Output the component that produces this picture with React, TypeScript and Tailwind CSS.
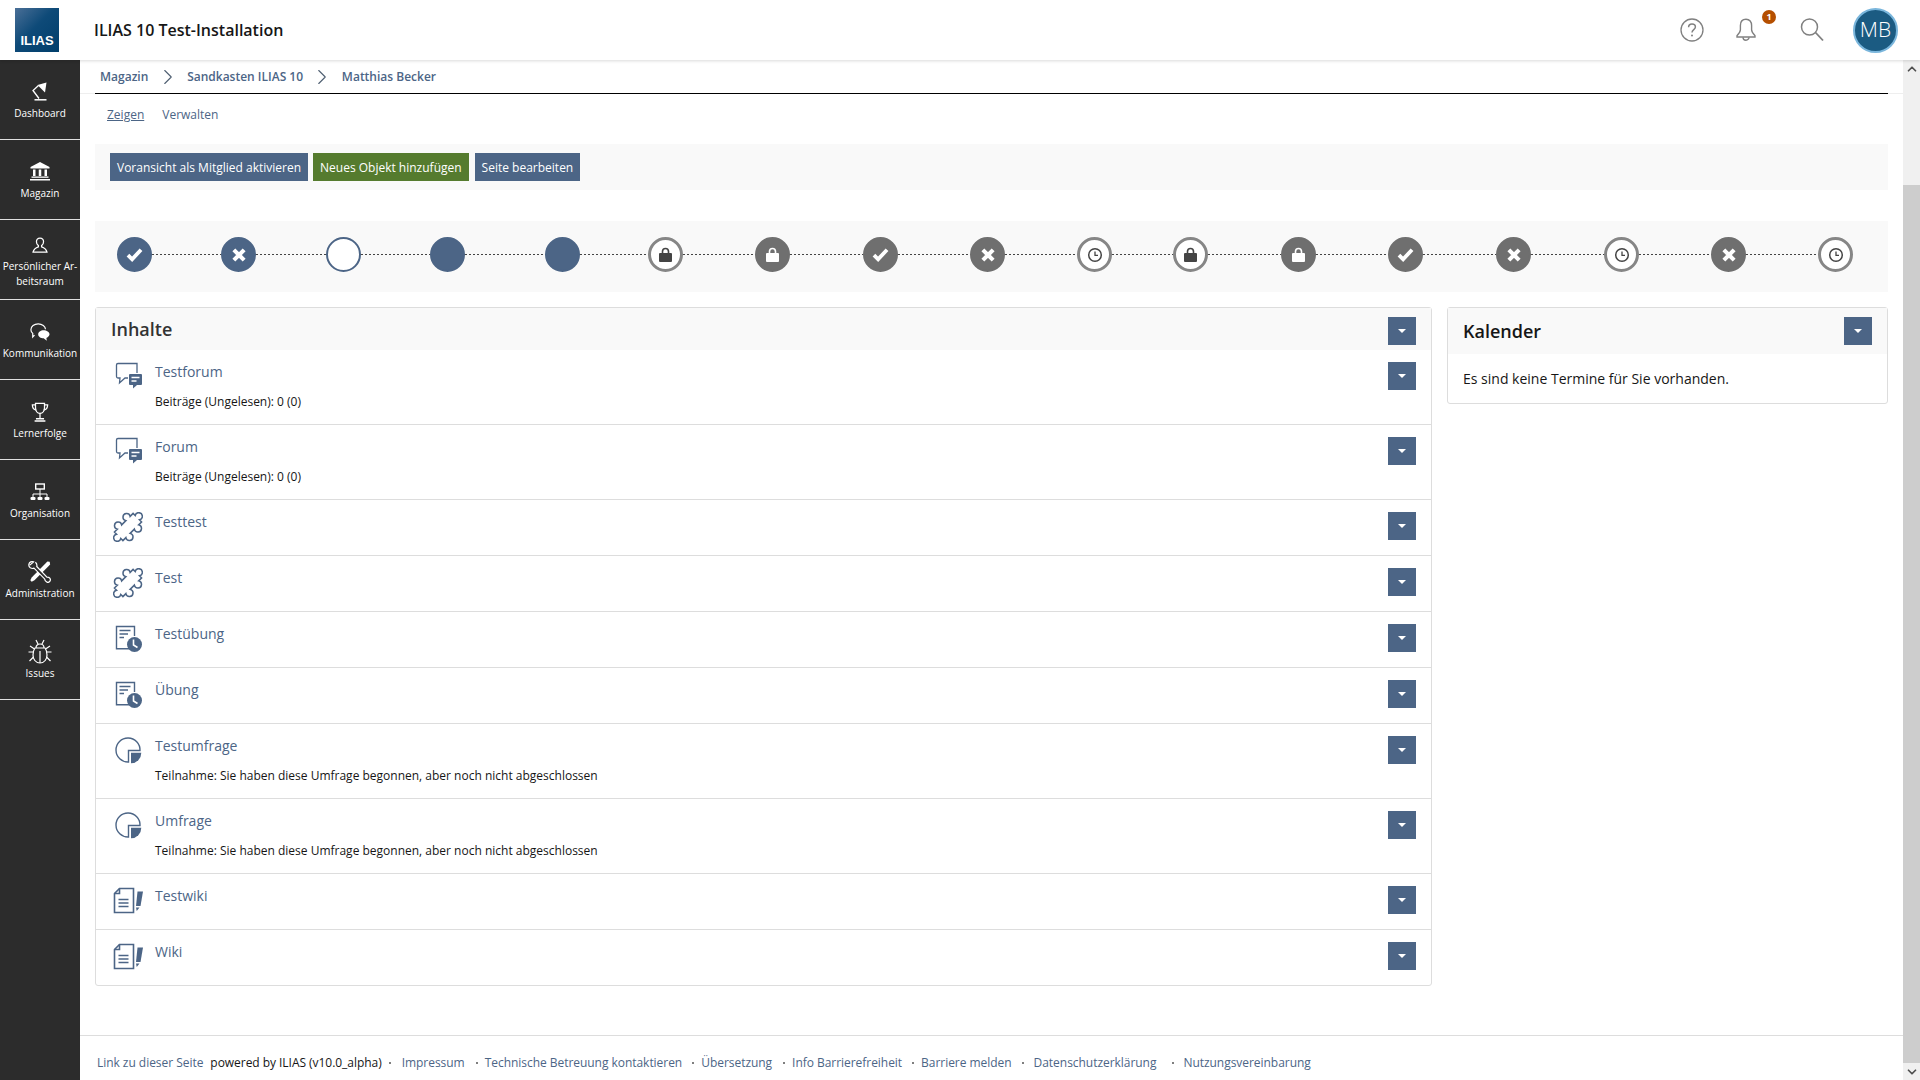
import { ChevronRight, ChevronUp, ChevronDown } from "lucide-react"

const font = "font-['Open_Sans',sans-serif]"

const navItems = [
  { label: ["Dashboard"], icon: <LampIcon /> },
  { label: ["Magazin"], icon: <BankIcon /> },
  { label: ["Persönlicher Ar-", "beitsraum"], icon: <UserIcon /> },
  { label: ["Kommunikation"], icon: <ChatNavIcon /> },
  { label: ["Lernerfolge"], icon: <TrophyIcon /> },
  { label: ["Organisation"], icon: <OrgIcon /> },
  { label: ["Administration"], icon: <ToolsIcon /> },
  { label: ["Issues"], icon: <BugIcon /> },
]

type NodeKind = "check" | "cross" | "ring" | "fill" | "lock" | "clock"

// gap = distance to the next circle centre, the steps are not equal in the picture
const steps: { kind: NodeKind; tone: "blue" | "gray"; outline?: boolean; gap: number }[] = [
  { kind: "check", tone: "blue", gap: 104 },
  { kind: "cross", tone: "blue", gap: 105 },
  { kind: "ring", tone: "blue", outline: true, gap: 104 },
  { kind: "fill", tone: "blue", gap: 115 },
  { kind: "fill", tone: "blue", gap: 103 },
  { kind: "lock", tone: "gray", outline: true, gap: 107 },
  { kind: "lock", tone: "gray", gap: 108 },
  { kind: "check", tone: "gray", gap: 107 },
  { kind: "cross", tone: "gray", gap: 107 },
  { kind: "clock", tone: "gray", outline: true, gap: 96 },
  { kind: "lock", tone: "gray", outline: true, gap: 108 },
  { kind: "lock", tone: "gray", gap: 107 },
  { kind: "check", tone: "gray", gap: 108 },
  { kind: "cross", tone: "gray", gap: 108 },
  { kind: "clock", tone: "gray", outline: true, gap: 107 },
  { kind: "cross", tone: "gray", gap: 107 },
  { kind: "clock", tone: "gray", outline: true, gap: 0 },
]

const rows = [
  { title: "Testforum", sub: "Beiträge (Ungelesen): 0 (0)", icon: <ForumIcon /> },
  { title: "Forum", sub: "Beiträge (Ungelesen): 0 (0)", icon: <ForumIcon /> },
  { title: "Testtest", icon: <PuzzleIcon /> },
  { title: "Test", icon: <PuzzleIcon /> },
  { title: "Testübung", icon: <ExerciseIcon /> },
  { title: "Übung", icon: <ExerciseIcon /> },
  { title: "Testumfrage", sub: "Teilnahme: Sie haben diese Umfrage begonnen, aber noch nicht abgeschlossen", icon: <SurveyIcon /> },
  { title: "Umfrage", sub: "Teilnahme: Sie haben diese Umfrage begonnen, aber noch nicht abgeschlossen", icon: <SurveyIcon /> },
  { title: "Testwiki", icon: <WikiIcon /> },
  { title: "Wiki", icon: <WikiIcon /> },
]

export default function App() {
  return (
    <div className={`flex h-screen flex-col overflow-hidden bg-white text-[#161616] ${font}`}>
      <header className="relative z-10 flex h-[60px] shrink-0 items-center bg-white shadow-[0_1px_3px_rgba(0,0,0,0.15)]">
        <div className="ml-[15px] flex h-[44px] w-[44px] items-end justify-center bg-[linear-gradient(135deg,#4a6f97_0%,#0e4a78_45%,#003e6b_100%)] pb-[1px]">
          <span className="font-['Liberation_Sans',sans-serif] text-[13px] font-bold leading-[20px] text-white">ILIAS</span>
        </div>
        <div className="ml-[35px] text-[16px] font-semibold text-[#161616]">ILIAS 10 Test-Installation</div>
        <div className="ml-auto mr-[22px] flex items-center">
          <HelpIcon />
          <div className="relative ml-[31px]">
            <BellIcon />
            <span className="absolute left-[27px] top-[-8px] flex h-[14px] w-[14px] items-center justify-center rounded-full bg-[#b54f00] text-[9px] font-bold text-white">1</span>
          </div>
          <div className="ml-[43px]"><SearchIcon /></div>
          <div className="ml-[29px] flex h-[45px] w-[45px] items-center justify-center rounded-full border-2 border-[#7ab6dc] bg-[#1b5b82] text-[21px] font-light text-white">MB</div>
        </div>
      </header>

      <div className="flex min-h-0 flex-1">
        <nav className="w-[80px] shrink-0 bg-[#2c2c2c]">
          {navItems.map((item) => (
            <div key={item.label[0]} className={`flex h-[80px] flex-col items-center border-b border-[#e0e0e0] text-white ${item.label.length > 1 ? "pt-[12px]" : "pt-[19px]"}`}>
              <div className="flex h-[25px] w-[30px] items-center justify-center">{item.icon}</div>
              <div className="mt-[2px] text-center text-[10px] leading-[15px]">
                {item.label.map((line) => <div key={line} className="whitespace-nowrap">{line}</div>)}
              </div>
            </div>
          ))}
        </nav>

        <main className="flex min-w-0 flex-1 flex-col">
          <div className="border-b border-[#eeeeee]">
            <div className="mx-[15px] -mb-px flex h-[34px] items-center border-b border-black pl-[5px] text-[12px] font-semibold text-[#4c6586]">
              <span>Magazin</span>
              <ChevronRight className="mx-[6.4px] h-[26px] w-[26px] text-[#4f5f72]" strokeWidth={1} />
              <span>Sandkasten ILIAS 10</span>
              <ChevronRight className="mx-[6.4px] h-[26px] w-[26px] text-[#4f5f72]" strokeWidth={1} />
              <span>Matthias Becker</span>
            </div>
          </div>

          <div className="px-[15px]">
            <div className="flex h-[50px] items-center gap-[18px] pb-[8px] pl-[12px] text-[12px] text-[#4c6586]">
              <span className="underline">Zeigen</span>
              <span>Verwalten</span>
            </div>

            <div className="flex h-[46px] items-center gap-[5px] bg-[#f9f9f9] pl-[15px]">
              <Btn>Voransicht als Mitglied aktivieren</Btn>
              <Btn green>Neues Objekt hinzufügen</Btn>
              <Btn>Seite bearbeiten</Btn>
            </div>

            <div className="mt-[31px] flex h-[71px] items-center bg-[#f9f9f9] pb-[4px] pl-[22px]">
              {steps.map((step, i) => (
                <div key={i} className="flex items-center">
                  <StepNode kind={step.kind} tone={step.tone} outline={step.outline} />
                  {step.gap > 0 && (
                    <div
                      className="h-[1px] bg-[repeating-linear-gradient(90deg,#444444_0,#444444_2px,transparent_2px,transparent_4px)]"
                      style={{ width: step.gap - 35 }}
                    />
                  )}
                </div>
              ))}
            </div>

            <div className="mt-[15px] flex items-start gap-[15px]">
              <section className="min-w-0 flex-1 rounded-[3px] border border-[#dddddd]">
                <div className="flex h-[42px] items-center justify-between bg-[#f9f9f9] px-[15px]">
                  <h2 className="text-[18px] font-semibold text-[#333333]">Inhalte</h2>
                  <div className="mt-[4px]"><Caret /></div>
                </div>
                {rows.map((row) => (
                  <div key={row.title} className={`flex border-b border-[#dddddd] last:h-[55px] last:border-b-0 ${row.sub ? "h-[75px]" : "h-[56px]"} pl-[17px] pr-[15px]`}>
                    <div className="mt-[12px] h-[30px] w-[30px] shrink-0">{row.icon}</div>
                    <div className="ml-[12px] min-w-0 flex-1 pt-[12px]">
                      <div className="text-[14px] leading-[20px] text-[#4c6586]">{row.title}</div>
                      {row.sub && <div className="mt-[11px] text-[12px] leading-[18px] text-[#161616]">{row.sub}</div>}
                    </div>
                    <div className="mt-[12px]"><Caret /></div>
                  </div>
                ))}
              </section>

              <section className="w-[441px] shrink-0 rounded-[3px] border border-[#dddddd]">
                <div className="flex h-[46px] items-center justify-between bg-[#f9f9f9] pl-[15px] pr-[15px]">
                  <h2 className="text-[18px] font-semibold text-[#161616]">Kalender</h2>
                  <Caret />
                </div>
                <div className="px-[15px] pb-[14px] pt-[15px] text-[14px] leading-[20px]">Es sind keine Termine für Sie vorhanden.</div>
              </section>
            </div>
          </div>

          <footer className="mt-[49px] flex h-[46px] items-center border-t border-[#dddddd] pl-[17px] pt-[9px] text-[12px] tracking-[-0.04px] text-[#4c6586]">
            <span>Link zu dieser Seite</span>
            <span className="ml-[7px] text-[#161616]">powered by ILIAS (v10.0_alpha)</span>
            <Dot className="ml-[7px] mr-[11px]" />
            <span>Impressum</span>
            <Dot className="ml-[11px] mr-[7px]" />
            <span>Technische Betreuung kontaktieren</span>
            <Dot className="ml-[10px] mr-[7px]" />
            <span>Übersetzung</span>
            <Dot className="ml-[11px] mr-[7px]" />
            <span>Info Barrierefreiheit</span>
            <Dot className="ml-[10px] mr-[7px]" />
            <span>Barriere melden</span>
            <Dot className="mx-[10px]" />
            <span>Datenschutzerklärung</span>
            <Dot className="ml-[16px] mr-[9px]" />
            <span>Nutzungsvereinbarung</span>
          </footer>
        </main>

        <div className="flex w-[17px] shrink-0 flex-col bg-[#f0f0f0]">
          <div className="flex h-[17px] items-center justify-center"><ChevronUp className="h-[14px] w-[14px] text-[#505050]" strokeWidth={3} /></div>
          <div className="mt-[108px] flex-1 bg-[#cdcdcd]" />
          <div className="flex h-[17px] items-center justify-center"><ChevronDown className="h-[14px] w-[14px] text-[#505050]" strokeWidth={3} /></div>
        </div>
      </div>
    </div>
  )
}

function Btn({ children, green }: { children: string; green?: boolean }) {
  return <div className={`flex h-[28px] items-center px-[7px] pt-[2px] text-[12px] text-white last:ml-[1px] ${green ? "bg-[#557b2e]" : "bg-[#4c6586]"}`}>{children}</div>
}

function Caret() {
  return (
    <div className="flex h-[28px] w-[28px] shrink-0 items-center justify-center bg-[#4c6586]">
      <div className="h-0 w-0 border-x-[4px] border-t-[4px] border-x-transparent border-t-white" />
    </div>
  )
}

function Dot({ className }: { className: string }) {
  return <span className={`${className} h-[2px] w-[2px] shrink-0 rounded-full bg-[#555555]`} />
}

function StepNode({ kind, tone, outline }: { kind: NodeKind; tone: "blue" | "gray"; outline?: boolean }) {
  const box = tone === "blue"
    ? outline ? "border-2 border-[#4c6586] bg-white" : "border-2 border-[#4c6586] bg-[#4c6586]"
    : outline ? "border-[3px] border-[#868686] bg-white" : "border-2 border-[#6f6f6f] bg-[#6f6f6f]"
  const ink = outline ? "#444444" : "#ffffff"
  return (
    <div className={`flex h-[35px] w-[35px] shrink-0 items-center justify-center rounded-full ${box}`}>
      {kind === "check" && (
        <svg width="19" height="17" viewBox="0 0 16 14"><path d="M2.5 7.500 6 11 13.500 3" fill="none" stroke={ink} strokeWidth="3.200" /></svg>
      )}
      {kind === "cross" && (
        <svg width="16" height="16" viewBox="0 0 14 14"><path d="M2.500 2.500 11.500 11.500M11.500 2.500 2.500 11.500" fill="none" stroke={ink} strokeWidth="3.600" /></svg>
      )}
      {kind === "lock" && (
        <svg width="15" height="16" viewBox="0 0 15 16">
          <path d="M4.500 7V4.500a3 3 0 0 1 6 0V7" fill="none" stroke={ink} strokeWidth="1.600" />
          <rect x="1" y="6" width="13" height="9" rx="1" fill={ink} />
        </svg>
      )}
      {kind === "clock" && (
        <svg width="16" height="16" viewBox="0 0 16 16">
          <circle cx="8" cy="8" r="6.300" fill="none" stroke={ink} strokeWidth="1.500" />
          <path d="M8 4.500V8.400H11" fill="none" stroke={ink} strokeWidth="1.300" />
        </svg>
      )}
    </div>
  )
}

function HelpIcon() {
  return (
    <svg width="24" height="24" viewBox="0 0 24 24" fill="none" stroke="#808080" strokeWidth="1.300">
      <circle cx="12" cy="12" r="11" />
      <path d="M8.600 9.300c0-2 1.500-3.300 3.400-3.300s3.400 1.300 3.400 3c0 2.600-3.400 2.600-3.400 5.400" strokeWidth="1.500" />
      <circle cx="12" cy="17.600" r="1" fill="#808080" stroke="none" />
    </svg>
  )
}

function BellIcon() {
  return (
    <svg className="block" width="22" height="24" viewBox="0 0 22 24" fill="none" stroke="#808080" strokeWidth="1.400">
      <path d="M11 1.200c-3.700 0-5.600 2.800-5.600 6.200v4.300c0 2.400-1.600 4-3.400 6v1.300h18v-1.300c-1.800-2-3.400-3.600-3.400-6V7.400c0-3.400-1.900-6.200-5.600-6.200z" />
      <path d="M8 19.200a3 3 0 0 0 6 0" />
    </svg>
  )
}

function SearchIcon() {
  return (
    <svg className="block" width="24" height="24" viewBox="0 0 24 24" fill="none" stroke="#808080" strokeWidth="1.500">
      <circle cx="9.500" cy="9" r="8" />
      <path d="M15.500 14.500 23 22.500" strokeWidth="1.800" />
    </svg>
  )
}

function LampIcon() {
  return (
    <svg width="16" height="19" viewBox="0 0 16 19" fill="none" stroke="white" strokeWidth="1.300">
      <path d="M7 16.500 1 8.500 6.500 3.500" />
      <path d="M2.500 17.800h12" strokeWidth="1.500" />
      <path d="M5.500 3 14.500 .5 13 10.500z" fill="white" stroke="none" />
    </svg>
  )
}

function BankIcon() {
  return (
    <svg width="20" height="19" viewBox="0 0 20 19" fill="white">
      <path d="M10 0 19.500 5v1.500H.5V5z" />
      <rect x="3" y="7.500" width="2.500" height="6.500" />
      <rect x="8.750" y="7.500" width="2.500" height="6.500" />
      <rect x="14.500" y="7.500" width="2.500" height="6.500" />
      <rect x="1.500" y="14.500" width="17" height="1.300" />
      <rect x="0" y="17" width="20" height="1.500" />
    </svg>
  )
}

function UserIcon() {
  return (
    <svg width="16" height="16" viewBox="0 0 18 18" fill="none" stroke="white" strokeWidth="1.400">
      <path d="M9 1.200c-2.600 0-4 1.900-4 4.200 0 2 1 3.500 2.200 4.300v1.400c-2.500.8-5 1.700-6 5.800h15.600c-1-4.100-3.500-5-6-5.800V9.700C12 8.900 13 7.400 13 5.400c0-2.300-1.400-4.200-4-4.200z" />
    </svg>
  )
}

function ChatNavIcon() {
  return (
    <svg width="20" height="20" viewBox="0 0 22 20" fill="none" stroke="white" strokeWidth="1.300">
      <path d="M5 13.500 3 15.500 3 11.500C1.800 10.500 1 9 1 7.500 1 4 4.600 1 9 1s8 3 8 6" />
      <path d="M15 8c-3.300 0-6 1.900-6 4.600S11.700 17 15 17l3.500 2.500-.5-3c2-.8 3.500-2.200 3.500-3.900C21.500 9.900 18.300 8 15 8z" fill="white" stroke="none" />
    </svg>
  )
}

function TrophyIcon() {
  return (
    <svg width="18" height="20" viewBox="0 0 20 22" fill="none" stroke="white" strokeWidth="1.400">
      <path d="M5 1.500h10V6c0 3.500-1.800 6.500-5 6.500S5 9.500 5 6z" />
      <path d="M5 3H1.500c0 3.500 1.500 5.500 4.500 6M15 3h3.500c0 3.500-1.500 5.500-4.500 6" />
      <path d="M10 12.500V18" />
      <path d="M5.500 18.500h9M4 21h12" strokeWidth="1.400" />
    </svg>
  )
}

function OrgIcon() {
  return (
    <svg width="20" height="18" viewBox="0 0 20 18" fill="none" stroke="white" strokeWidth="1">
      <rect x="5.700" y="1" width="8.600" height="5" strokeWidth="1.400" />
      <path d="M10 6v5M3 14v-3h14v3M10 11v3" />
      <rect x="0.500" y="14" width="5" height="3" rx="1" fill="white" stroke="none" />
      <rect x="7.500" y="14" width="5" height="3" rx="1" fill="white" stroke="none" />
      <rect x="14.500" y="14" width="5" height="3" rx="1" fill="white" stroke="none" />
    </svg>
  )
}

function ToolsIcon() {
  return (
    <svg width="24" height="24" viewBox="0 0 26 26" fill="none" stroke="white">
      <path d="M23.500 2 21 1.500 4 19l-1.500 3 1.500 1.500 3-1.500L24 5z" fill="white" stroke="none" />
      <path d="M2 5.500 6 2c-2-.8-4.500 0-5 2.500-.3 1.500 0 3 1.500 4 1.400.8 3 .8 4 .3L18 20.500c.2 1.500 1 3 2.500 3.500 1.200.5 3 0 3.500-1.500.6-1.600 0-3-1.500-3.700-.8-.3-1.600-.3-2-.3L9.500 7c.4-1.600-.2-3.400-1.500-4.500" strokeWidth="1.300" fill="#2c2c2c" />
    </svg>
  )
}

function BugIcon() {
  return (
    <svg width="26" height="26" viewBox="0 0 26 26" fill="none" stroke="white" strokeWidth="1.200">
      <path d="M9 9c0-2.500 1.700-4 4-4s4 1.500 4 4" />
      <path d="M9 1l2 4M17 1l-2 4" />
      <path d="M8 9h10c1.500 2 2 4.500 2 7 0 4-2.500 8-7 8s-7-4-7-8c0-2.500.5-5 2-7z" />
      <path d="M13 12v12M6 13H1.500M20 13h4.500M6.500 18l-4 4M19.500 18l4 4M7.500 10 3 7M18.500 10 23 7" />
    </svg>
  )
}

function ForumIcon() {
  return (
    <svg width="30" height="30" viewBox="0 0 30 30" fill="none" stroke="#4c6586" strokeWidth="1.300">
      <path d="M24 11V1.500H5A1.500 1.500 0 0 0 3.500 3V14.500A1.500 1.500 0 0 0 5 16H7L6.500 21L12 16H15" />
      <rect x="16" y="12" width="13" height="11" rx="1" fill="#4c6586" stroke="none" />
      <path d="M20 23v3.500l4-3.500z" fill="#4c6586" stroke="none" />
      <path d="M18.500 15.500h8M18.500 19h5" stroke="white" strokeWidth="1.400" />
    </svg>
  )
}

function PuzzleIcon() {
  return (
    <svg width="30" height="30" viewBox="0 0 30 30" fill="none" stroke="#4c6586" strokeWidth="1.250">
      <path
        transform="translate(15 15) rotate(-45) scale(1.2)"
        d="M-11 -5H-7.500a3 3 0 1 1 5 0H2.500a3 3 0 1 1 5 0H11V-2.500a3 3 0 1 1 0 5V5H7.500a3 3 0 1 1 -5 0H-2.500a3 3 0 1 1 -5 0H-11V2.500a3 3 0 1 1 0 -5z"
      />
    </svg>
  )
}

function ExerciseIcon() {
  return (
    <svg width="30" height="30" viewBox="0 0 30 30" fill="none" stroke="#4c6586" strokeWidth="1.400">
      <path d="M16 24.700H3.500V2.500h18v9.500" />
      <path d="M6.500 6.500h11M6.500 10h8.500M6.500 13.500h4.500" strokeWidth="1.600" />
      <circle cx="21.500" cy="20.500" r="7.500" fill="#4c6586" stroke="none" />
      <path d="M20.500 15.500v5.500l4 2.500" stroke="white" strokeWidth="1.600" />
    </svg>
  )
}

function SurveyIcon() {
  return (
    <svg width="30" height="30" viewBox="0 0 30 30" fill="none" stroke="#4c6586" strokeWidth="1.400">
      <path d="M15.500 26A12 12 0 1 1 27 14.500H15.500z" />
      <path d="M18 16.800H28.300A10.500 10.500 0 0 1 18 27.300z" fill="#4c6586" stroke="none" />
    </svg>
  )
}

function WikiIcon() {
  return (
    <svg width="30" height="30" viewBox="0 0 30 30" fill="none" stroke="#4c6586" strokeWidth="1.600">
      <path d="M6.500 2.500h14v24H1.500V7.500z" />
      <path d="M1.500 7.500h5v-5" />
      <path d="M5.500 13.500h10M5.500 17h10M5.500 20.500h10" strokeWidth="1.400" />
      <path d="M24.500 5.500H30L27.500 20H23z" fill="#4c6586" stroke="none" />
      <path d="M23 21.500H26.500L23.700 25z" fill="#4c6586" stroke="none" />
    </svg>
  )
}
